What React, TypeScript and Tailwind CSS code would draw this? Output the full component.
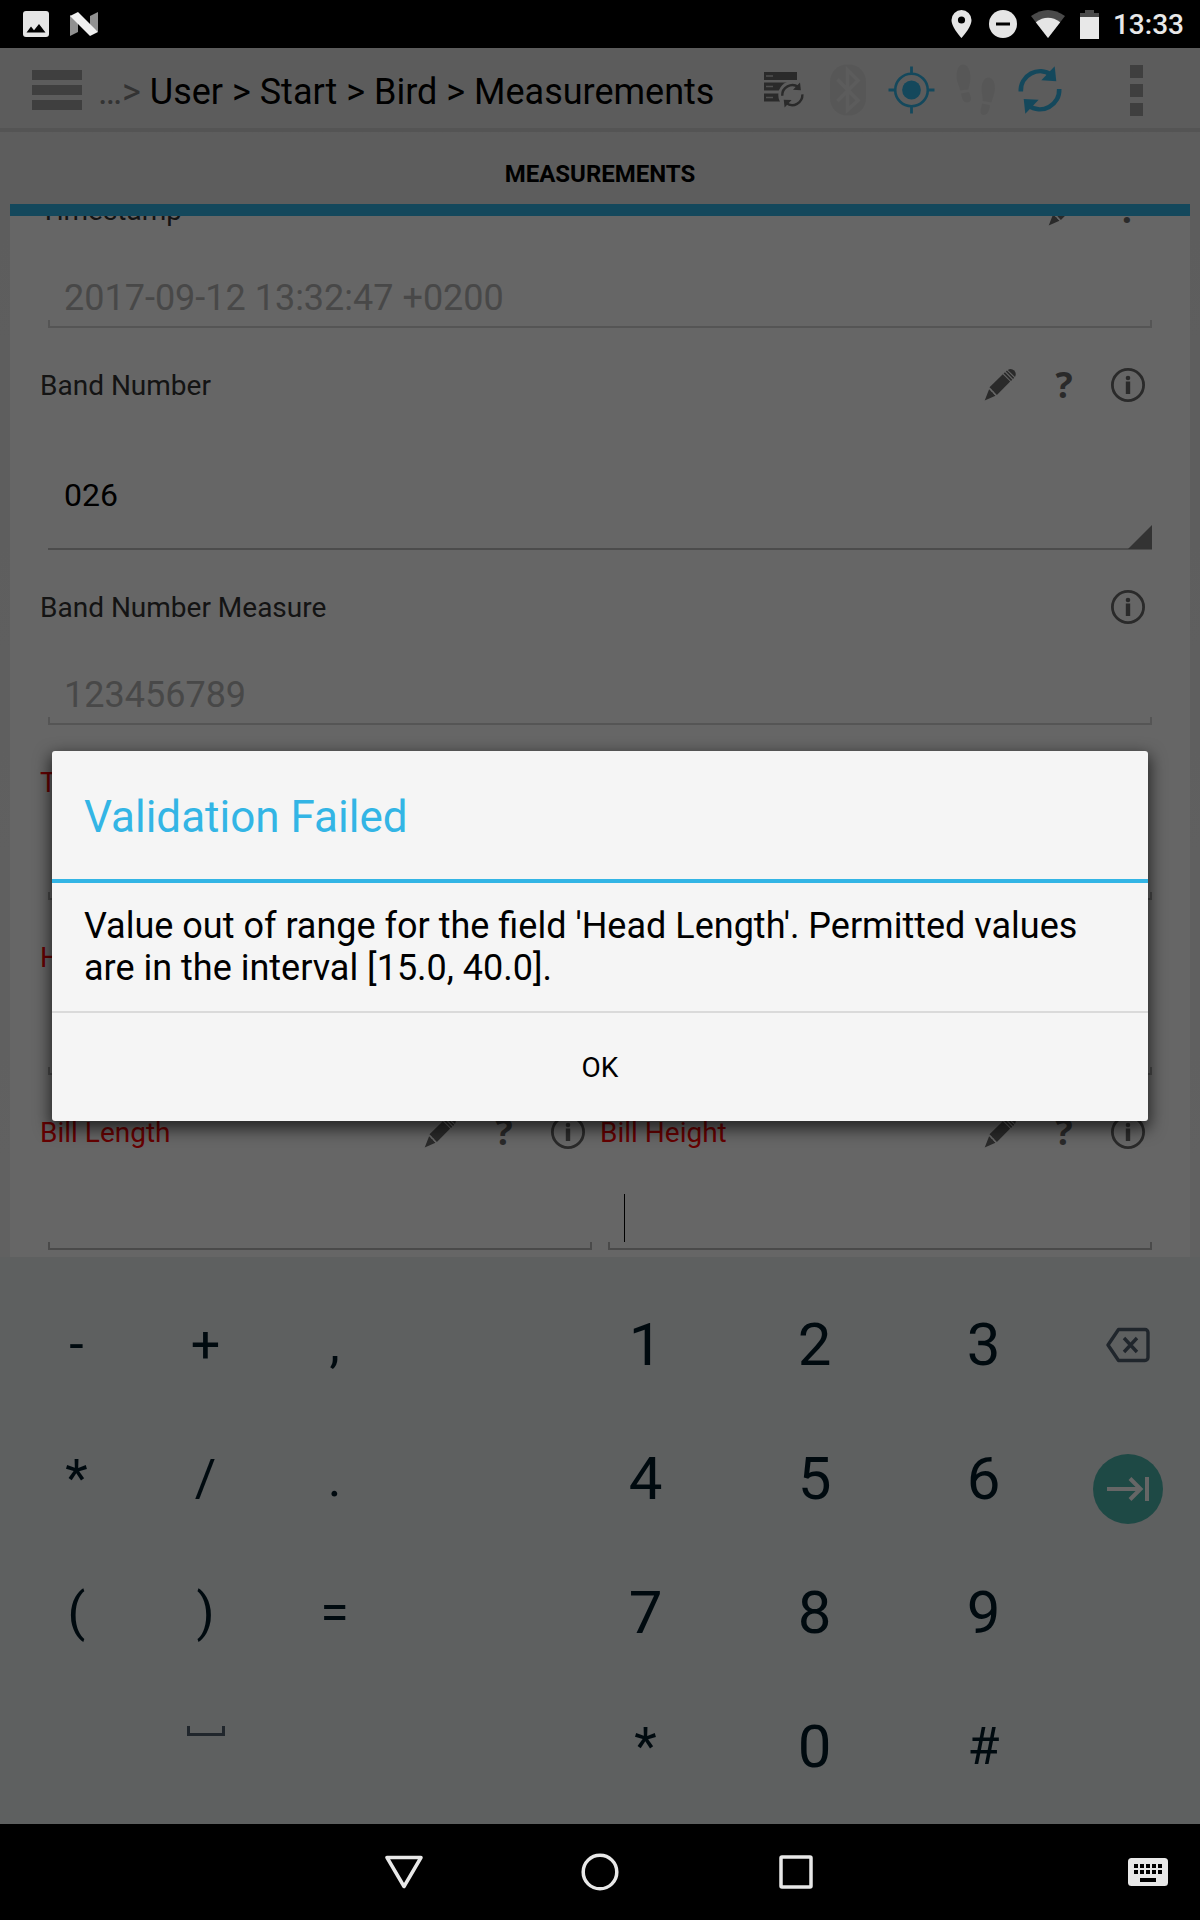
import type { ReactNode } from "react";

/* ---------- status bar ---------- */

function StatusBar() {
  return (
    <div className="flex h-12 shrink-0 items-center justify-between bg-black pl-[23px] pr-4">
      <div className="flex items-center gap-[21px]">
        <svg width="26" height="26" viewBox="0 0 26 26" aria-hidden="true">
          <rect width="26" height="26" rx="3" fill="#e5e5e5" />
          <path d="M3.5 21.5 8 15.5l3 3.8 5-6.3 6.5 8.5z" fill="#000" />
        </svg>
        <svg width="28" height="24" viewBox="0 0 28 24" aria-hidden="true">
          <path d="M0 3v21l8-4V8zM20 4l8-4v20l-8-6z" fill="#919191" />
          <path d="M0 4 8 0l20 20-8 4z" fill="#f0f0f0" />
        </svg>
      </div>
      <div className="flex items-center">
        <svg width="21" height="28" viewBox="0 0 21 28" className="mr-[17px]" aria-hidden="true">
          <path
            d="M10.5 0A10 10 0 0 0 .5 10c0 7.400 10 18 10 18s10-10.600 10-18a10 10 0 0 0-10-10zm0 13.600a3.600 3.600 0 1 1 0-7.200 3.600 3.600 0 0 1 0 7.200z"
            fill="#e5e5e5"
          />
        </svg>
        <svg width="28" height="28" viewBox="0 0 28 28" className="mr-[14px]" aria-hidden="true">
          <circle cx="14" cy="14" r="14" fill="#e5e5e5" />
          <rect x="7" y="12.500" width="14" height="3" fill="#000" />
        </svg>
        <svg width="34" height="28" viewBox="0 0 34 28" className="mr-[15px]" aria-hidden="true">
          <path d="M0 6Q17-6 34 6L17 28z" fill="#4a4a4a" />
          <path d="M4.800 12.200Q17 3.500 29.200 12.200L17 28z" fill="#e5e5e5" />
        </svg>
        <svg width="19" height="29" viewBox="0 0 19 29" className="mr-[14px]" aria-hidden="true">
          <path d="M5 0h9v3h5v5H0V3h5z" fill="#4a4a4a" />
          <rect y="7" width="19" height="22" fill="#e8e8e8" />
        </svg>
        <span className="pt-0.5 text-[28px] font-medium leading-8 text-[#e8e8e8]">13:33</span>
      </div>
    </div>
  );
}

/* ---------- action bar ---------- */

const topArc = "M12.800 43.500A19.300 19.300 0 0 1 43.500 27";
const bottomArc = "M51.200 41A19.300 19.300 0 0 1 20.500 57.500";

function SyncArrows({ color }: { color: string }) {
  return (
    <g>
      <path d={topArc} fill="none" stroke={color} strokeWidth="4.600" />
      <path d={bottomArc} fill="none" stroke={color} strokeWidth="4.600" />
      <path d="M46.700 18.300 48.300 33.200 33.300 32.300z" fill={color} />
      <path d="M15.700 51 30.700 51.700 17.300 65.700z" fill={color} />
    </g>
  );
}

function BarButton({ label, children }: { label: string; children: ReactNode }) {
  return (
    <button type="button" aria-label={label} className="h-20 w-16 shrink-0">
      <svg width="64" height="80" viewBox="0 0 64 80" aria-hidden="true">
        {children}
      </svg>
    </button>
  );
}

function ActionBar() {
  return (
    <header className="flex h-[84px] shrink-0 items-start border-b-4 border-[#d2d2d2] bg-[#e6e6e6] pl-8">
      <button type="button" aria-label="Open menu" className="flex h-20 w-[50px] shrink-0 flex-col justify-center gap-[5px] pt-1">
        <span className="h-[10px] w-full bg-[#9e9e9e]" />
        <span className="h-[10px] w-full bg-[#9e9e9e]" />
        <span className="h-[10px] w-full bg-[#9e9e9e]" />
      </button>
      <h1 className="ml-4 min-w-0 flex-1 truncate pt-0.5 text-4xl leading-[84px] text-black">
        <span className="text-[#808080]">…&gt; </span>
        User &gt; Start &gt; Bird &gt; Measurements
      </h1>
      <BarButton label="Sync records">
        <g fill="#696969">
          <rect x="12" y="34.500" width="24" height="8" />
          <rect x="12" y="45.500" width="16" height="8" />
        </g>
        <path d="M14 38.500h7M14 49.500h7" stroke="#c8c8c8" strokeWidth="1.500" />
        <circle cx="40.300" cy="47" r="14" fill="#e6e6e6" />
        <rect x="12" y="24" width="33" height="8" fill="#696969" />
        <path d="M14 28h7" stroke="#c8c8c8" strokeWidth="1.500" />
        <g transform="translate(23.500 24.900) scale(0.525)">
          <SyncArrows color="#696969" />
        </g>
      </BarButton>
      <BarButton label="Bluetooth">
        <rect x="14" y="16.500" width="36" height="51" rx="17" fill="#dadada" />
        <path d="M21.500 31.500 42 52.500 31.500 62V22L42 32.500 21.500 53" fill="none" stroke="#e6e6e6" strokeWidth="3.500" />
      </BarButton>
      <BarButton label="Location">
        <circle cx="31.500" cy="42" r="16.300" fill="none" stroke="#33b5e5" strokeWidth="2.600" />
        <circle cx="31.500" cy="42" r="9.400" fill="#33b5e5" />
        <path d="M31.500 18.500v7M31.500 58.500v7M8.500 42h6M48.500 42h6" stroke="#33b5e5" strokeWidth="2.800" />
      </BarButton>
      <BarButton label="Track">
        <g fill="#dadada">
          <path d="M19 16.500c5 0 7.500 6 7.500 13 0 5-1.500 8-2 12l-8.500 1c-.5-5-3.500-8-3.500-14 0-7 2-12 6.500-12z" />
          <path d="M17 45.500l8-1.500c1 3 2.500 5 2 7.500-.5 4-7 4-8.500 0-.8-2-1-4-1.500-6z" />
          <path d="M44.500 29.500c4.500 0 6.500 5 6.500 11 0 5-2.500 9-3.500 14l-9-1.500c.5-4-1-7-1-12 0-7 3-11.500 7-11.500z" />
          <path d="M38 55.500l8 1.500c0 2-.5 4-1.500 6.500-1.500 4.500-8 4.500-8 .5 0-3 1-5.500 1.500-8.500z" />
        </g>
      </BarButton>
      <BarButton label="Refresh">
        <SyncArrows color="#33b5e5" />
      </BarButton>
      <button type="button" aria-label="More options" className="flex h-20 w-32 shrink-0 flex-col items-center justify-center gap-[6px] pt-1">
        <span className="size-[13px] bg-[#9e9e9e]" />
        <span className="size-[13px] bg-[#9e9e9e]" />
        <span className="size-[13px] bg-[#9e9e9e]" />
      </button>
    </header>
  );
}

/* ---------- form ---------- */

function EditButton() {
  return (
    <button type="button" aria-label="Edit" className="flex size-16 items-center justify-center">
      <svg width="32" height="32" viewBox="0 0 32 32" fill="#696969" aria-hidden="true">
        <path d="M0.700 31.500 5.200 20 11.500 26.800z" />
        <path d="M5.500 18.300 18.800 5.200 26.200 12.600 12.900 26z" />
        <path d="M19.600 4.600 20.900 3.300 28.300 10.700 27 12zM21.800 2.600 22.900 1.500 30.200 8.800 29.100 9.900z" />
        <path d="M23.800.9Q27.500-1 30.200 1.600T31 8z" />
        <path d="M4.800 19.800l2 .4.500 2 2 .5.700 2 1.800 1.800" fill="none" stroke="#fff" strokeWidth="1" />
      </svg>
    </button>
  );
}

function HelpButton() {
  return (
    <button
      type="button"
      aria-label="Help"
      className="size-16 font-['Open_Sans','Noto_Sans',sans-serif] text-4xl font-bold leading-[60px] text-[#696969]"
    >
      ?
    </button>
  );
}

function InfoButton() {
  return (
    <button type="button" aria-label="Info" className="flex size-16 items-center justify-center">
      <svg width="34" height="34" viewBox="0 0 34 34" aria-hidden="true">
        <circle cx="17" cy="17" r="15.600" fill="none" stroke="#696969" strokeWidth="2.800" />
        <circle cx="17" cy="10" r="2.300" fill="#696969" />
        <rect x="14.800" y="13.500" width="4.400" height="12.500" fill="#696969" />
      </svg>
    </button>
  );
}

interface FieldProps {
  id: string;
  label: string;
  required?: boolean;
  placeholder?: string;
  edit?: boolean;
  help?: boolean;
  info?: boolean;
  focused?: boolean;
  options?: string[];
}

function Field({ id, label, required, placeholder, edit, help, info, focused, options }: FieldProps) {
  const disabled = placeholder !== undefined;
  return (
    <div className="min-w-0 flex-1">
      <div className="flex h-16 items-center">
        <label
          htmlFor={id}
          className={
            required ? "flex-1 pt-0.5 text-[28px] leading-8 text-[#ff0000]" : "flex-1 pt-0.5 text-[28px] leading-8 text-[#333333]"
          }
        >
          {label}
        </label>
        {edit && <EditButton />}
        {help && <HelpButton />}
        {info && <InfoButton />}
      </div>
      {options ? (
        <div className="relative mx-2">
          <select
            id={id}
            className="block h-[133px] w-full appearance-none border-b-2 border-[#bdbdbd] bg-transparent px-4 pt-6 text-[32px] text-black outline-none"
          >
            {options.map((option) => (
              <option key={option}>{option}</option>
            ))}
          </select>
          <svg width="24" height="24" viewBox="0 0 24 24" className="pointer-events-none absolute bottom-px right-0" aria-hidden="true">
            <path d="M24 0v24H0z" fill="#808080" />
          </svg>
        </div>
      ) : (
        <div className="relative mx-2">
          <input
            id={id}
            type="text"
            disabled={disabled}
            placeholder={placeholder}
            className="block h-[78px] w-full bg-transparent px-4 pt-[34px] text-4xl text-black outline-none placeholder:text-[#b4b4b4]"
          />
          <div className={disabled ? "h-2 border-x-2 border-b-2 border-[#d4d4d4]" : "h-2 border-x-2 border-b-2 border-[#b9b9b9]"} />
          {focused && <span className="absolute bottom-2 left-4 h-12 w-px bg-black" />}
        </div>
      )}
    </div>
  );
}

const rows: FieldProps[][] = [
  [{ id: "timestamp", label: "Timestamp", placeholder: "2017-09-12 13:32:47 +0200", edit: true, help: true }],
  [{ id: "band-number", label: "Band Number", options: ["026"], edit: true, help: true, info: true }],
  [{ id: "band-number-measure", label: "Band Number Measure", placeholder: "123456789", info: true }],
  [{ id: "tarsus", label: "Tarsus", required: true, edit: true, help: true, info: true }],
  [{ id: "head-length", label: "Head Length", required: true, edit: true, help: true, info: true }],
  [
    { id: "bill-length", label: "Bill Length", required: true, edit: true, help: true, info: true },
    { id: "bill-height", label: "Bill Height", required: true, edit: true, help: true, info: true, focused: true },
  ],
];

function MeasurementsForm() {
  return (
    <main className="flex min-h-0 flex-1 flex-col bg-linear-to-b from-[#e8e8e8] to-[#f3f3f3] px-[10px]">
      <h2 className="h-[72px] shrink-0 pt-1.5 text-center text-2xl font-bold leading-[72px] text-black">MEASUREMENTS</h2>
      <div className="h-3 shrink-0 bg-[#33b5e5]" />
      {/* The list is scrolled to its end, so the first row is cut off at the top. */}
      <form className="flex min-h-0 flex-1 flex-col justify-end gap-[25px] overflow-hidden bg-white px-[30px] pb-[7px]">
        {rows.map((row) => (
          <div key={row[0].id} className="flex shrink-0">
            {row.map((field) => (
              <Field key={field.id} {...field} />
            ))}
          </div>
        ))}
      </form>
    </main>
  );
}

/* ---------- keyboard ---------- */

const keys: string[][] = [
  ["-", "+", ",", "", "1", "2", "3", "delete"],
  ["*", "/", ".", "", "4", "5", "6", "next"],
  ["(", ")", "=", "", "7", "8", "9", ""],
  ["", "space", "", "", "*", "0", "#", ""],
];

function Key({ value }: { value: string }) {
  if (value === "") return <span />;
  if (value === "delete") {
    return (
      <button type="button" aria-label="Delete" className="flex items-center justify-center">
        <svg width="44" height="40" viewBox="0 0 44 40" fill="none" stroke="#505f6e" strokeWidth="3.400" aria-hidden="true">
          <path d="M12.500 4.500H39a3 3 0 0 1 3 3v25a3 3 0 0 1-3 3H12.500L2 20z" strokeLinejoin="round" />
          <path d="M18 13 31 27M31 13 18 27" />
        </svg>
      </button>
    );
  }
  if (value === "next") {
    return (
      <button type="button" aria-label="Next field" className="flex items-center justify-center pt-5">
        <span className="flex size-[70px] items-center justify-center rounded-full bg-[#4db6ac]">
          <svg width="42" height="24" viewBox="0 0 42 24" fill="none" stroke="#fff" strokeWidth="4" aria-hidden="true">
            <path d="M0 12h34M23 1.500 33.500 12 23 22.500M40 0v24" />
          </svg>
        </span>
      </button>
    );
  }
  if (value === "space") {
    return (
      <button type="button" aria-label="Space" className="flex items-center justify-center pb-8">
        <span className="h-[10px] w-[38px] border-x-[3px] border-b-[3px] border-[#505f6e]" />
      </button>
    );
  }
  return (
    <button
      type="button"
      className={/\d/.test(value) ? "text-center text-[60px] text-[#001a26]" : "text-center text-[52px] text-[#001a26]"}
    >
      {value}
    </button>
  );
}

function Keyboard() {
  return (
    <div className="grid shrink-0 auto-rows-[134px] grid-cols-[129fr_129fr_129fr_162fr_169fr_169fr_169fr_120fr] bg-[#eceff1] px-3 pb-[10px] pt-[21px]">
      {keys.map((row, r) => row.map((value, c) => <Key key={`${r}-${c}`} value={value} />))}
    </div>
  );
}

/* ---------- dialog ---------- */

function ValidationDialog() {
  return (
    <div className="absolute inset-0 flex items-center bg-black/60 px-[52px]">
      <div
        role="alertdialog"
        aria-labelledby="dialog-title"
        aria-describedby="dialog-message"
        className="w-full rounded-[3px] bg-[#f5f5f5] shadow-[0_6px_16px_2px_rgba(0,0,0,0.65)]"
      >
        <h2 id="dialog-title" className="border-b-4 border-[#33b5e5] px-8 pt-1 text-[44px] leading-[124px] text-[#33b5e5]">
          Validation Failed
        </h2>
        <p id="dialog-message" className="border-b-2 border-[#dadada] px-8 py-[22px] text-4xl leading-[42px] text-black">
          Value out of range for the field 'Head Length'. Permitted values are in the interval [15.0, 40.0].
        </p>
        <button type="button" className="block h-[108px] w-full pt-0.5 text-[28px] text-black">
          OK
        </button>
      </div>
    </div>
  );
}

/* ---------- navigation bar ---------- */

function NavigationBar() {
  return (
    <nav className="grid h-24 shrink-0 grid-cols-[1fr_196px_196px_196px_1fr] items-center bg-black">
      <span />
      <button type="button" aria-label="Back" className="flex justify-center">
        <svg width="38" height="34" viewBox="0 0 38 34" fill="none" stroke="#e8e8e8" strokeWidth="3.500" strokeLinejoin="round" aria-hidden="true">
          <path d="M2 2.500h34L19 31.500z" />
        </svg>
      </button>
      <button type="button" aria-label="Home" className="flex justify-center">
        <svg width="38" height="38" viewBox="0 0 38 38" fill="none" stroke="#e8e8e8" strokeWidth="3.500" aria-hidden="true">
          <circle cx="19" cy="19" r="16.800" />
        </svg>
      </button>
      <button type="button" aria-label="Recent apps" className="flex justify-center">
        <svg width="34" height="34" viewBox="0 0 34 34" fill="none" stroke="#e8e8e8" strokeWidth="3.500" aria-hidden="true">
          <rect x="2" y="2" width="30" height="30" rx="1" />
        </svg>
      </button>
      <button type="button" aria-label="Switch keyboard" className="flex justify-end pr-8">
        <svg width="40" height="28" viewBox="0 0 40 28" aria-hidden="true">
          <rect width="40" height="28" rx="3.500" fill="#e8e8e8" />
          <path d="M6 8h28M6 14h28" stroke="#000" strokeWidth="4" strokeDasharray="4 2" />
          <rect x="12" y="20" width="16" height="4" fill="#000" />
        </svg>
      </button>
    </nav>
  );
}

export default function App() {
  return (
    <div className="flex h-screen flex-col bg-black font-['Roboto',sans-serif]">
      <StatusBar />
      <div className="relative flex min-h-0 flex-1 flex-col">
        <ActionBar />
        <MeasurementsForm />
        <Keyboard />
        <ValidationDialog />
      </div>
      <NavigationBar />
    </div>
  );
}
